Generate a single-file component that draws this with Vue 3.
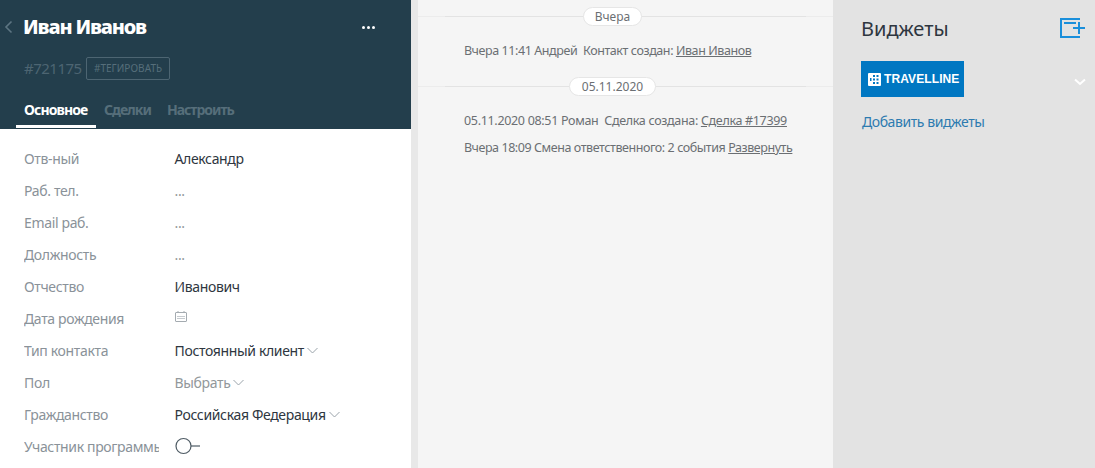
<script setup>
const rows = [
  { label: 'Отв-ный', value: 'Александр', kind: 'val' },
  { label: 'Раб. тел.', value: '...', kind: 'empty' },
  { label: 'Email раб.', value: '...', kind: 'empty' },
  { label: 'Должность', value: '...', kind: 'empty' },
  { label: 'Отчество', value: 'Иванович', kind: 'val' },
  { label: 'Дата рождения', kind: 'date' },
  { label: 'Тип контакта', value: 'Постоянный клиент', kind: 'val', arrow: true },
  { label: 'Пол', value: 'Выбрать', kind: 'empty', arrow: true },
  { label: 'Гражданство', value: 'Российская Федерация', kind: 'val', arrow: true },
  { label: 'Участник программы', kind: 'toggle' },
]
</script>

<template>
  <div class="page">
    <section class="left">
      <header class="head">
        <div class="title-row">
          <svg class="back" width="9" height="14" viewBox="0 0 9 14"><path d="M7.500 1.500 2 7l5.500 5.500" fill="none" stroke="#5d7582" stroke-width="1.600"/></svg>
          <h1 class="name">Иван Иванов</h1>
          <div class="dots"><i></i><i></i><i></i></div>
        </div>
        <div class="tag-row">
          <span class="id">#721175</span>
          <span class="tag">#ТЕГИРОВАТЬ</span>
        </div>
        <nav class="tabs">
          <span class="tab active">Основное</span>
          <span class="tab">Сделки</span>
          <span class="tab">Настроить</span>
        </nav>
      </header>
      <div class="fields">
        <div v-for="r in rows" :key="r.label" class="row">
          <span class="label">{{ r.label }}</span>
          <span class="value" :class="r.kind">
            <template v-if="r.value">{{ r.value }}</template>
            <svg v-if="r.arrow" class="arrow" width="11" height="7" viewBox="0 0 11 7"><path d="M.5 1 5.500 6l5-5" fill="none" stroke="#9aa3aa" stroke-width="1"/></svg>
            <svg v-if="r.kind === 'date'" class="cal" width="12" height="11" viewBox="0 0 12 11"><path d="M1 1.500h10a.5.5 0 0 1 .5.5v8a.5.5 0 0 1-.5.5H1a.5.5 0 0 1-.5-.5V2a.5.5 0 0 1 .5-.5zM3 0v2M9 0v2" fill="none" stroke="#a4abb0"/><path d="M2.500 5.500h7M2.500 7.500h7" stroke="#8d979e" stroke-dasharray="1 1"/></svg>
            <svg v-if="r.kind === 'toggle'" class="toggle" width="25" height="18" viewBox="0 0 25 18"><circle cx="8.500" cy="9" r="7.500" fill="#fff" stroke="#4e5b64" stroke-width="1.200"/><path d="M16 9h9" stroke="#4e5b64" stroke-width="1.200"/></svg>
          </span>
        </div>
      </div>
    </section>

    <main class="feed">
      <div class="sep first"><span class="pill pill-a">Вчера</span></div>
      <p class="note n1">Вчера 11:41 Андрей&nbsp; Контакт создан: <a>Иван Иванов</a></p>
      <div class="sep second"><span class="pill pill-b">05.11.2020</span></div>
      <p class="note n2">05.11.2020 08:51 Роман&nbsp; Сделка создана: <a>Сделка #17399</a></p>
      <p class="note n3">Вчера 18:09 Смена ответственного: 2 события <a>Развернуть</a></p>
    </main>

    <aside class="side">
      <div class="side-head">
        <h2>Виджеты</h2>
        <svg class="add" width="25" height="20" viewBox="0 0 25 20"><path d="M20 1H1v18h19" fill="none" stroke="#1a8fdb" stroke-width="2"/><path d="M4 5h12M13 10h12M19 4v12" fill="none" stroke="#1a8fdb" stroke-width="2"/></svg>
      </div>
      <div class="widget-row">
        <div class="logo">
          <svg width="13" height="13" viewBox="0 0 13 13"><rect width="13" height="13" rx="1" fill="#fff"/><g fill="#0077c2"><rect x="5" y="2" width="2" height="2"/><rect x="8.500" y="2" width="2" height="2"/><rect x="5" y="5.500" width="2" height="2"/><rect x="8.500" y="5.500" width="2" height="2"/><rect x="5" y="9" width="2" height="2"/><rect x="8.500" y="9" width="2" height="2"/><rect x="2" y="5" width="1.500" height="3"/></g></svg>
          <span>TRAVELLINE</span>
        </div>
        <svg class="chev" width="12" height="8" viewBox="0 0 12 8"><path d="M1 1.500 6 6l5-4.500" fill="none" stroke="#fff" stroke-width="2"/></svg>
      </div>
      <a class="add-link">Добавить виджеты</a>
    </aside>
  </div>
</template>

<style>
html, body { margin: 0; background: #e8e8e8; overflow: hidden; }
</style>

<style scoped>
.page {
  display: flex;
  width: 1095px;
  height: 468px;
  overflow: hidden;
  font-family: "Noto Sans", "Liberation Sans", sans-serif;
  font-size: 14px;
  background: #e8e8e8;
}
.left { width: 411px; flex: none; background: #fff; }
.head { height: 129px; background: #233e4c; box-sizing: border-box; position: relative; }
.title-row { display: flex; align-items: center; height: 54px; padding-left: 4px; margin-bottom: 2px; }
.name { margin: 0 0 0 10px; font: 800 20px/28px "Noto Sans", sans-serif; color: #fff; letter-spacing: -1.2px; }
.dots { margin-left: auto; margin-right: 36px; display: flex; gap: 2px; }
.dots i { width: 3px; height: 3px; background: #fff; border-radius: 50%; }
.tag-row { display: flex; align-items: center; padding-left: 24px; height: 24px; margin-top: 1px; }
.id { font-size: 15px; color: #4d6572; letter-spacing: -.5px; width: 62px; }
.tag { border: 1px solid #4d6572; border-radius: 2px; height: 23px; width: 84px; box-sizing: border-box; font-size: 10px; line-height: 21px; color: #566e7a; text-align: center; letter-spacing: .05px; white-space: nowrap; }
.tabs { display: flex; padding-left: 16px; margin-top: 18px; height: 30px; }
.tab { font-size: 14px; font-weight: 700; color: #566e7a; line-height: 24px; letter-spacing: -1px; padding: 0 8px; }
.tab.active { color: #fff; height: 30px; box-sizing: border-box; border-bottom: 3px solid #fff; width: 80px; white-space: nowrap; letter-spacing: -.9px; }
.fields { padding-top: 13px; }
.row { display: flex; height: 32px; align-items: center; padding-left: 24px; }
.label { width: 135px; margin-right: 15.5px; white-space: nowrap; overflow: hidden; color: #8a9299; letter-spacing: -.35px; flex: none; }
.value { display: flex; align-items: center; gap: 3px; letter-spacing: -.35px; white-space: nowrap; }
.value.val { color: #2e3640; }
.value.empty { color: #92989b; }
.cal { margin-top: -3px; }
.feed { width: 415px; flex: none; margin-left: 7px; background: #f5f5f5; color: #6b6f73; font-size: 12.5px; position: relative; box-sizing: border-box; }
.sep { height: 19px; position: relative; display: flex; justify-content: center; }
.sep::before { content: ""; position: absolute; left: 0; right: 0; top: 9px; border-top: 1px solid #ececec; }
.sep::after { content: ""; position: absolute; left: 27px; right: 27px; top: 9px; border-top: 1px solid #e3e3e3; }
.sep.first { margin-top: 7px; }
.sep.second { margin-top: 17px; }
.pill { position: relative; z-index: 1; height: 19px; box-sizing: border-box; background: #fff; border: 1px solid #e6e6e6; border-radius: 10px; font-size: 12px; line-height: 17px; color: #6b6f73; text-align: center; margin-right: 26px; }
.pill-a { width: 59px; }
.pill-b { width: 87px; }
.note { margin: 0; padding-left: 46px; line-height: 18px; white-space: nowrap; }
.n1 { margin-top: 16px; letter-spacing: -.41px; }
.n2 { margin-top: 16px; letter-spacing: -.32px; }
.n3 { margin-top: 9px; letter-spacing: -.43px; }
.note a { text-decoration: underline; }
.side { flex: 1; background: #e3e3e3; padding: 0 9px 0 28px; box-sizing: border-box; }
.side-head { display: flex; justify-content: space-between; align-items: center; height: 56px; margin-bottom: 2px; margin-right: 1px; }
.side-head h2 { margin: 0; font-size: 20px; font-weight: 400; color: #2e3640; letter-spacing: 0; }
.widget-row { display: flex; align-items: center; justify-content: space-between; margin-top: 5px; }
.logo { width: 103px; height: 36px; background: #0077c2; display: flex; align-items: center; gap: 3px; padding-left: 7px; box-sizing: border-box; color: #fff; font: 700 12px "Liberation Sans", sans-serif; letter-spacing: .1px; }
.chev { margin-top: 5px; }
.add-link { display: block; margin-top: 15px; margin-left: 1px; color: #2d7bb0; letter-spacing: -.42px; }
</style>
